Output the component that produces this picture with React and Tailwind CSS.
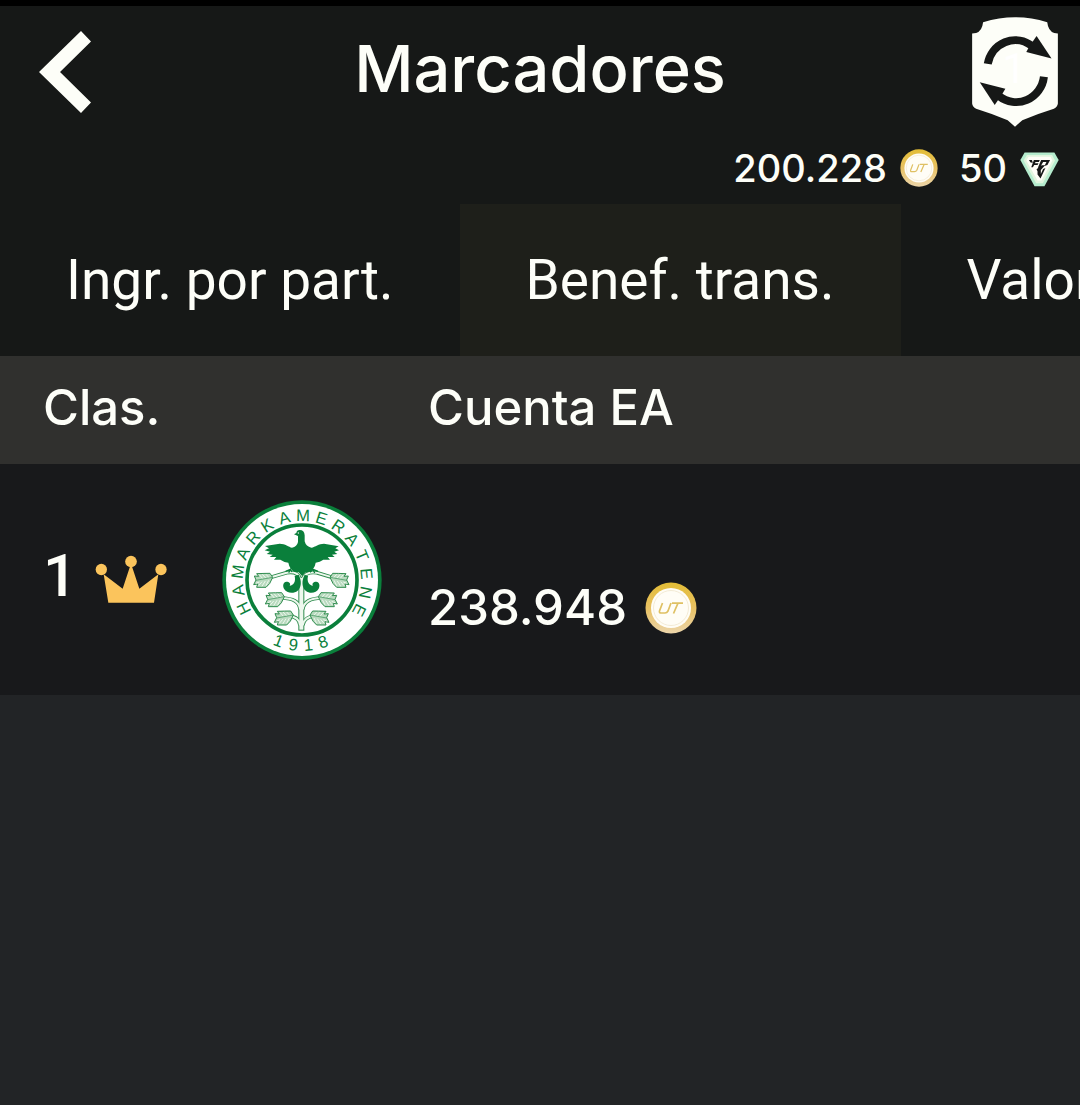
import { useId, useState } from "react";

const tabs = [
  { id: "income", label: "Ingr. por part." },
  { id: "profit", label: "Benef. trans." },
  { id: "value", label: "Valor" },
];

const ranking = [{ position: 1, club: "Hamarkameratene", amount: "238.948" }];

// letters of the club name, evenly spread over the upper arc
const crestName = "HAMARKAMERATENE".split("");
const crestYear = "1918".split("");

function BackIcon() {
  return (
    <svg viewBox="0 0 52 82" className="h-[82px] w-[52px]" aria-hidden="true">
      <path d="M42 0L52 10.500L21 41L52 71.500L42 82L0 41Z" fill="#fdfef8" />
    </svg>
  );
}

function RefreshBadge() {
  return (
    <svg viewBox="96 50 258 331" className="h-[110px] w-[86px]" aria-hidden="true">
      <path
        d="M129 66Q225 36 322 66Q325 93 343 98L354 100V310Q353 320 342 326Q290 342 247 361L225 380L203 361Q160 342 108 326Q97 320 96 310V100L108 98Q126 93 129 66Z"
        fill="#fdfef8"
      />
      <text x="187" y="250" fontSize="128" fontFamily="Roboto, sans-serif" fill="#ffffff">
        1
      </text>
      <path d="M143 191A84 86 0 0 1 276 137" fill="none" stroke="#161817" strokeWidth="24" />
      <path d="M290 107L335 175L259 155L267 140Z" fill="#161817" />
      <path d="M312 230A84 86 0 0 1 177 288" fill="none" stroke="#161817" strokeWidth="24" />
      <path d="M119 246L196 266L187 281L164 315Z" fill="#161817" />
    </svg>
  );
}

function Coin({ className }) {
  const id = useId();
  return (
    <svg viewBox="0 0 52 52" className={className} aria-hidden="true">
      <defs>
        <linearGradient id={id} x1="0" y1="0" x2="0" y2="1">
          <stop offset="0" stopColor="#e3bd36" />
          <stop offset="0.500" stopColor="#e8c163" />
          <stop offset="1" stopColor="#ecd5aa" />
        </linearGradient>
      </defs>
      <circle cx="26" cy="26" r="25.500" fill={`url(#${id})`} />
      <circle cx="26" cy="26" r="20" fill="#fffdf6" />
      <circle cx="26" cy="26" r="17.500" fill="none" stroke="#f0e6cd" strokeWidth="0.800" />
      <path
        d="M17.500 21L14.500 29Q14 31 16 31H20Q22 31 23 29L26 21M27 21.200H38M33 21.200L28.500 31.500"
        fill="none"
        stroke="#dfc063"
        strokeWidth="1.700"
      />
    </svg>
  );
}

function PointsIcon() {
  return (
    <svg viewBox="0 -8 118 112" className="h-[38px] w-[39px]" aria-hidden="true">
      <path d="M14 1H104L117 24L74 103H44L1 24Z" fill="#b5ecce" />
      <path d="M21 9H97L106 25L69 94H49L11 25Z" fill="#e2f6df" />
      <path d="M26 14H92L98 25L65 86H53L19 25Z" fill="#fffef8" />
      <path
        d="M27 24H36L39 32L32 31ZM42 24H60L57 30H47L45 34H56L53 39H43L39 46H34ZM64 24H91L83 39L74 42L80 30H70L60 47H54ZM50 52L66 40H76L63 54V66L70 51L77 48L62 80L53 68V58Z"
        fill="#161817"
      />
    </svg>
  );
}

function CrownIcon() {
  return (
    <svg viewBox="196 74 216 146" className="h-[49px] w-[72px]" aria-hidden="true">
      <g fill="#fbc45c">
        <circle cx="215" cy="117" r="17" />
        <circle cx="304" cy="93" r="17.500" />
        <circle cx="394" cy="117" r="17" />
        <path d="M222 131L279 175L301 108H307L329 175L386 131L373 217H236Z" />
      </g>
    </svg>
  );
}

function Leaf({ x, y, flip }) {
  return (
    <g transform={`translate(${x} ${y}) scale(${flip ? -1 : 1} 1)`}>
      <path
        d="M28 -8L20 -20Q4 -20 -20 -19L-14 -11L-27 -12L-22 0L-29 14L-17 12L-20 22L8 22Q20 14 28 -8Z"
        fill="#b9dabf"
        stroke="#2f8c4e"
        strokeWidth="3"
      />
      <path
        d="M18 -6L8 -17M8 -5L-3 -17M-2 -4L-12 -16M16 1L8 17M6 3L-4 19M-4 5L-14 17M-12 6L-22 10"
        fill="none"
        stroke="#eef8ee"
        strokeWidth="3"
      />
      <path d="M28 -8L-22 1" fill="none" stroke="#2f8c4e" strokeWidth="2" />
    </g>
  );
}

function ClubCrest({ name }) {
  return (
    <svg viewBox="38 42 480 480" className="size-40" role="img" aria-label={name}>
      <circle cx="278" cy="282" r="239" fill="#0a7f3b" />
      <circle cx="278" cy="282" r="228" fill="#ffffff" />
      <circle cx="278" cy="282" r="165" fill="none" stroke="#0a7f3b" strokeWidth="11" />
      <g
        fill="#0a7f3b"
        fontSize="50"
        fontFamily="'Liberation Sans', Arial, sans-serif"
        textAnchor="middle"
      >
        {crestName.map((letter, i) => (
          <text key={i} x="278" y="105" transform={`rotate(${-116 + i * 16.7} 278 282)`}>
            {letter}
          </text>
        ))}
        {crestYear.map((digit, i) => (
          <text key={i} x="278" y="495" transform={`rotate(${21 - i * 13.3} 278 282)`}>
            {digit}
          </text>
        ))}
      </g>

      {/* branch */}
      <g fill="none" stroke="#2f8c4e" strokeWidth="11">
        <path d="M276 434V276" strokeWidth="18" />
        <path d="M272 278C268 262 252 257 232 260L180 275" />
        <path d="M280 278C286 262 300 257 322 260L372 275" />
        <path d="M272 370C270 346 252 337 215 336M280 370C284 346 302 337 338 336" />
        <path d="M272 418C270 397 256 391 238 390M280 418C284 397 298 391 316 390" />
      </g>
      <g fill="none" stroke="#eef8ee" strokeWidth="6">
        <path d="M276 431V276" strokeWidth="12" />
        <path d="M272 278C268 262 252 257 232 260L180 275" />
        <path d="M280 278C286 262 300 257 322 260L372 275" />
        <path d="M272 370C270 346 252 337 215 336M280 370C284 346 302 337 338 336" />
        <path d="M272 418C270 397 256 391 238 390M280 418C284 397 298 391 316 390" />
      </g>
      <Leaf x={162} y={282} />
      <Leaf x={390} y={282} flip />
      <Leaf x={197} y={340} />
      <Leaf x={355} y={340} flip />
      <Leaf x={224} y={395} />
      <Leaf x={330} y={395} flip />

      {/* bird */}
      <g fill="#0a7f3b">
        <path d="M254 145L261 141Q262 132 271 132Q285 132 286 148V166Q290 182 306 185C318 183 328 173 344 173L388 181L378 187L389 193L375 197L384 204L368 206L376 213L355 213L362 221L342 221Q332 228 319 230Q316 250 298 258L288 259L278 270L268 259L256 258Q241 250 237 230Q224 229 213 221L194 221L201 213L181 213L190 206L172 204L182 197L166 193L179 187L167 180L211 173C228 173 238 183 248 185Q263 182 266 168V150Z" />
        <path d="M231 287C240 287 245 292 241 299C253 298 260 287 256 270L268 266C278 286 276 304 265 314C252 325 231 321 224 308C219 298 222 288 231 287Z" />
        <path d="M321 287C312 287 307 292 311 299C299 298 292 287 296 270L286 266C276 286 278 304 289 314C302 325 321 321 328 308C333 298 330 288 321 287Z" />
      </g>
      <path
        d="M254 242L243 250M229 256L243 250L248 258M238 260L243 250M300 242L311 250M302 259L311 250L326 256M311 250L316 261"
        fill="none"
        stroke="#0a7f3b"
        strokeWidth="4"
      />
      <circle cx="267" cy="141" r="2" fill="#ffffff" />
    </svg>
  );
}

export default function App() {
  const [activeTab, setActiveTab] = useState("profit");

  return (
    <div className="min-h-screen overflow-hidden border-t-[6px] border-black bg-[#222426] font-[Inter,sans-serif] text-[#fdfef8]">
      <header className="bg-[#161817]">
        <div className="grid grid-cols-[1fr_auto_1fr] items-center px-[22px] pt-2">
          <button type="button" aria-label="Volver" className="justify-self-start pt-[2px] pl-[17px]">
            <BackIcon />
          </button>
          <h1 className="pb-1 text-[65px] leading-[80px] font-medium">Marcadores</h1>
          <button type="button" aria-label="Actualizar" className="justify-self-end pt-[3px]">
            <RefreshBadge />
          </button>
        </div>
        <div className="flex h-[77px] items-center justify-end gap-[21px] pt-1 pr-[21px] text-[38px] leading-[40px] font-medium">
          <div className="flex items-center gap-[13px]">
            <span>200.228</span>
            <Coin className="size-[38px]" />
          </div>
          <div className="flex items-center gap-[13px]">
            <span>50</span>
            <PointsIcon />
          </div>
        </div>
        <nav role="tablist" className="flex h-[152px] overflow-hidden font-[Roboto,sans-serif] text-[55px]">
          {tabs.map((tab) => (
            <button
              key={tab.id}
              type="button"
              role="tab"
              aria-selected={tab.id === activeTab}
              onClick={() => setActiveTab(tab.id)}
              className={`shrink-0 px-[66px] whitespace-nowrap ${tab.id === activeTab ? "bg-[#1e1f1a]" : ""}`}
            >
              {tab.label}
            </button>
          ))}
        </nav>
      </header>

      <table className="w-full table-fixed text-left text-[49px] font-medium">
        <thead className="bg-[#30302e]">
          <tr className="h-[108px]">
            <th className="w-[428px] pb-1 pl-[43px] font-medium">Clas.</th>
            <th className="pb-1 font-medium">Cuenta EA</th>
          </tr>
        </thead>
        <tbody className="bg-[#18191b]">
          {ranking.map((row) => (
            <tr key={row.position} className="h-[231px]">
              <td className="pl-[43px]">
                <div className="flex items-center">
                  <span className="w-[52px] pb-2 font-[Roboto,sans-serif] text-[60px]">{row.position}</span>
                  <CrownIcon />
                  <div className="ml-[55px]">
                    <ClubCrest name={row.club} />
                  </div>
                </div>
              </td>
              <td className="pt-[57px]">
                <div className="flex items-center gap-[18px]">
                  <span>{row.amount}</span>
                  <Coin className="size-[52px]" />
                </div>
              </td>
            </tr>
          ))}
        </tbody>
      </table>
    </div>
  );
}
